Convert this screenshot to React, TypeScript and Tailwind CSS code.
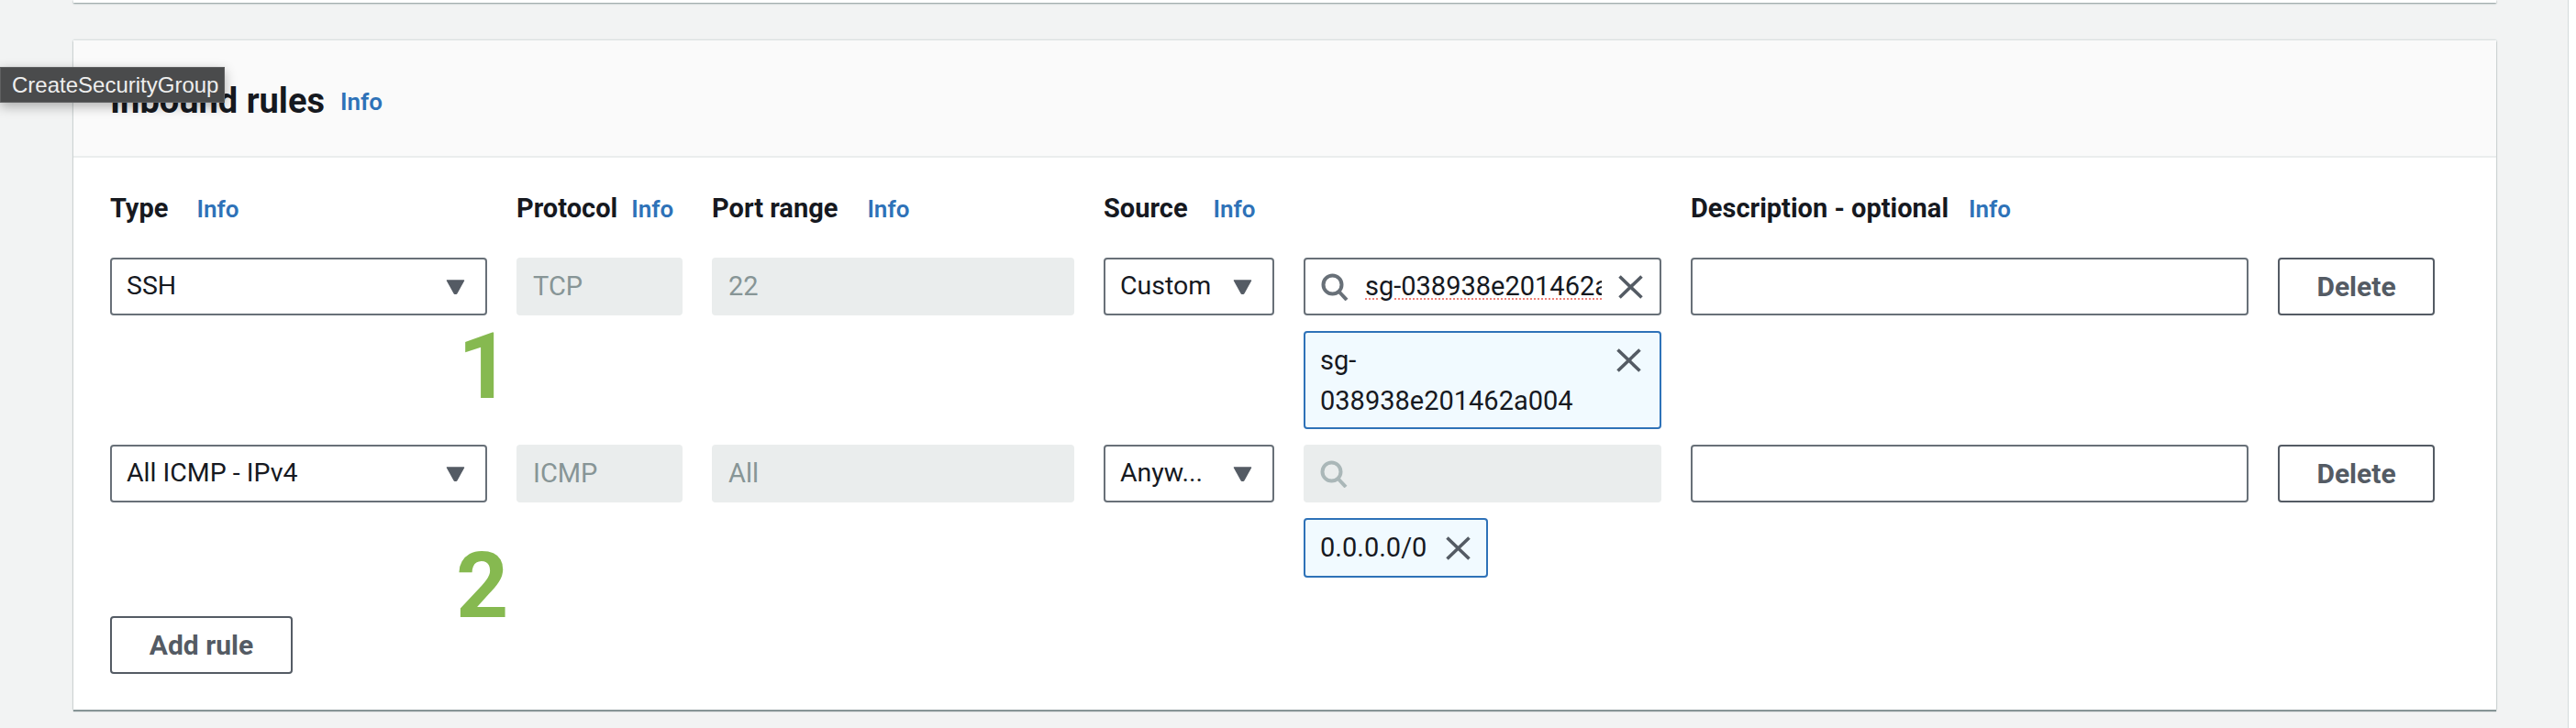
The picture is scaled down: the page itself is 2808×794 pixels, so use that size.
import React from "react";

const GRID = "grid grid-cols-[411px_181px_395px_186px_390px_608px_171px] gap-x-[32px]";
const FONT = "font-['Roboto','Liberation_Sans',sans-serif]";

function Caret() {
  return (
    <svg width="21" height="16" viewBox="0 0 21 16" className="shrink-0">
      <path d="M1.5 1h18l-7.6 13.6c-.6 1-2.2 1-2.8 0z" fill="#545b64" stroke="#545b64" strokeWidth="1.5" strokeLinejoin="round" />
    </svg>
  );
}

function SearchIcon({ color }: { color: string }) {
  return (
    <svg width="30" height="30" viewBox="0 0 30 30" className="shrink-0" fill="none" stroke={color} strokeWidth="4">
      <circle cx="12.5" cy="12.5" r="10" />
      <path d="M19.5 20l8.5 9" />
    </svg>
  );
}

function CloseIcon() {
  return (
    <svg width="27" height="26" viewBox="0 0 27 26" className="shrink-0" fill="none" stroke="#545b64" strokeWidth="3.6">
      <path d="M1.5 1.5l24 23M25.5 1.5l-24 23" />
    </svg>
  );
}

function Info() {
  return <span className="text-[26px] leading-[36px] font-semibold text-[#2e72b8]">Info</span>;
}

function HeadCell({ label, gap }: { label: string; gap: string }) {
  return (
    <div className={`flex items-baseline text-[29px] leading-[36px] font-bold text-[#16191f] whitespace-nowrap ${gap}`}>
      <span>{label}</span>
      <Info />
    </div>
  );
}

function Select({ value }: { value: string }) {
  return (
    <div className="h-[63px] flex items-center justify-between pl-[16px] pr-[22px] border-2 border-[#687078] rounded-[4px] bg-white text-[28.5px] text-[#16191f]">
      <span className="whitespace-nowrap">{value}</span>
      <Caret />
    </div>
  );
}

function Disabled({ value }: { value: string }) {
  return (
    <div className="h-[63px] flex items-center px-[18px] rounded-[4px] bg-[#eaeded] text-[29px] text-[#879596]">
      {value}
    </div>
  );
}

function Delete() {
  return (
    <button className="h-[63px] border-2 border-[#545b64] rounded-[4px] bg-white text-[30px] font-bold text-[#545b64]">
      Delete
    </button>
  );
}

function Description() {
  return <div className="h-[63px] border-2 border-[#687078] rounded-[4px] bg-white" />;
}

export default function App() {
  return (
    <div className={`relative w-[2808px] h-[794px] overflow-hidden bg-white ${FONT}`}>
      <div className="w-[2800px] h-[794px] bg-[#f2f3f3] border-r border-[#d5dbdb] pl-[80px]">
        <div className="w-[2641px] h-[3px] bg-white shadow-[0_1px_2px_#879596]" />

        <div className="relative w-[2641px] mt-[41px] h-[730px] bg-white shadow-[0_2px_1px_#879596,0_0_2px_#aab7b8]">
          <div className="h-[128px] pl-[40px] pt-[6px] flex items-center gap-[17px] bg-[#fafafa] border-b-2 border-[#eaeded]">
            <h2 className="text-[38px] font-bold text-[#16191f]">Inbound rules</h2>
            <span className="mt-[3px] text-[26px] font-semibold text-[#2e72b8]">Info</span>
          </div>

          <div className="pl-[40px] pt-[37px] pb-[40px]">
            <div className={`${GRID} mb-[35px]`}>
              <HeadCell label="Type" gap="gap-[31px]" />
              <HeadCell label="Protocol" gap="gap-[15px]" />
              <HeadCell label="Port range" gap="gap-[32px]" />
              <HeadCell label="Source" gap="gap-[28px]" />
              <div />
              <HeadCell label="Description - optional" gap="gap-[22px]" />
              <div />
            </div>

            <div className={GRID}>
              <Select value="SSH" />
              <Disabled value="TCP" />
              <Disabled value="22" />
              <Select value="Custom" />
              <div className="flex flex-col gap-[17px]">
                <div className="h-[63px] flex items-center pl-[17px] pr-[18px] border-2 border-[#687078] rounded-[4px] bg-white text-[29px] text-[#16191f]">
                  <SearchIcon color="#687078" />
                  <div className="ml-[18px] w-[258px] overflow-hidden whitespace-nowrap underline decoration-dotted decoration-[#f0837a] decoration-2 underline-offset-4">
                    sg-038938e201462a004
                  </div>
                  <div className="ml-auto">
                    <CloseIcon />
                  </div>
                </div>
                <div className="h-[107px] flex items-start justify-between pl-[16px] pr-[20px] pt-[8px] border-2 border-[#2e72b8] rounded-[4px] bg-[#f1faff] text-[29px] leading-[44px] text-[#16191f]">
                  <span className="w-[300px]">
                    sg-
                    <br />
                    038938e201462a004
                  </span>
                  <div className="mt-[9px]">
                    <CloseIcon />
                  </div>
                </div>
              </div>
              <Description />
              <Delete />
            </div>

            <div className={`${GRID} mt-[17px]`}>
              <Select value="All ICMP - IPv4" />
              <Disabled value="ICMP" />
              <Disabled value="All" />
              <Select value="Anyw..." />
              <div className="flex flex-col items-start gap-[17px]">
                <div className="w-full h-[63px] flex items-center pl-[18px] rounded-[4px] bg-[#eaeded]">
                  <SearchIcon color="#aab7b8" />
                </div>
                <div className="w-[201px] h-[65px] flex items-center justify-between pl-[16px] pr-[17px] border-2 border-[#2e72b8] rounded-[4px] bg-[#f1faff] text-[29px] text-[#16191f]">
                  <span>0.0.0.0/0</span>
                  <CloseIcon />
                </div>
              </div>
              <Description />
              <Delete />
            </div>

            <button className="mt-[42px] w-[199px] h-[63px] border-2 border-[#545b64] rounded-[4px] bg-white text-[30px] font-bold text-[#545b64]">
              Add rule
            </button>
          </div>

          <span className="absolute left-[419px] top-[306px] text-[100px] leading-[100px] font-bold text-[#86b950]">
            1
          </span>
          <span className="absolute left-[417px] top-[545px] text-[100px] leading-[100px] font-bold text-[#86b950]">
            2
          </span>
        </div>
      </div>

      <div className="absolute left-0 top-[73px] w-[245px] h-[39px] flex items-center pl-[12px] border border-[#5f6061] bg-[#4a4b4c] text-[24px] text-[#eeeeee] whitespace-nowrap font-['Liberation_Sans',sans-serif] shadow-[0_4px_12px_rgba(0,0,0,0.3)]">
        CreateSecurityGroup
      </div>
    </div>
  );
}
